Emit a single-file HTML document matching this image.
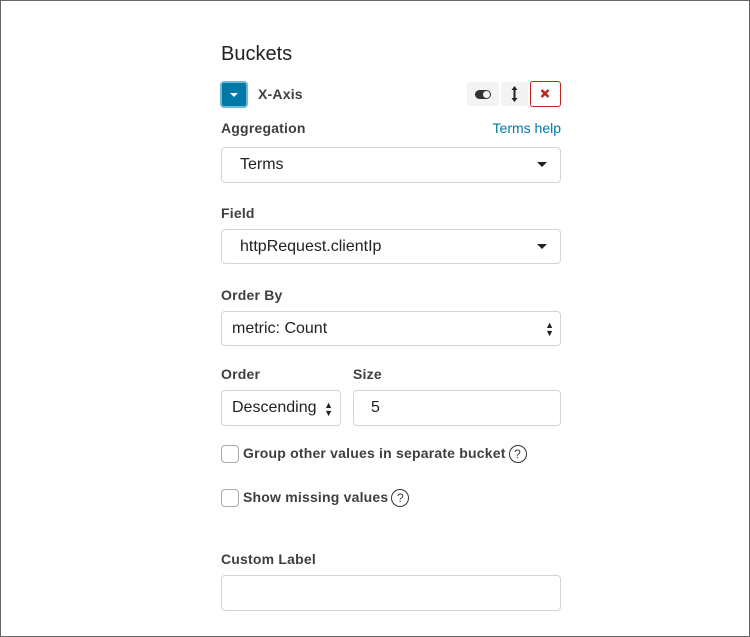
<!DOCTYPE html>
<html><head><style>
*{box-sizing:border-box;margin:0;padding:0}
body{width:750px;height:637px;background:#fff;font-family:"Liberation Sans",sans-serif;color:#333;position:relative;overflow:hidden}
.frame{position:absolute;left:0;top:0;width:750px;height:637px;border:1px solid #666}
.a{position:absolute}
.lbl{font-weight:bold;font-size:14px;color:#3f3f3f;letter-spacing:0.2px}
.box{border:1px solid #d4d4d4;border-radius:4px;background:#fff;font-size:16px;color:#222;display:flex;align-items:center}
.caret{position:absolute;right:13px;top:50%;margin-top:-3px;border-left:5px solid transparent;border-right:5px solid transparent;border-top:5px solid #222}
.cb{width:18px;height:18px;border:1px solid #aaa;border-radius:4px}
.q{display:inline-block;width:18px;height:18px;border:1.3px solid #333;border-radius:50%;font-size:12px;text-align:center;line-height:16px;font-weight:normal;margin-left:3px;vertical-align:middle}
</style></head><body>
<div class="frame"></div>
<div class="a" style="left:221px;top:43px;font-size:20px;color:#222">Buckets</div>
<div class="a" style="left:220px;top:81px;width:28px;height:27px;background:#0079a5;border:2px solid #6fb8d6;border-radius:4px"><div style="position:absolute;left:8px;top:10px;border-left:4px solid transparent;border-right:4px solid transparent;border-top:4px solid #fff"></div></div>
<div class="a lbl" style="left:258px;top:86px">X-Axis</div>
<div class="a" style="left:467px;top:82px;width:32px;height:24px;background:#f3f3f3;border-radius:3px"><div style="position:absolute;left:8px;top:8px;width:16px;height:9px;border-radius:5px;background:#333"><div style="position:absolute;right:1px;top:1px;width:7px;height:7px;border-radius:50%;background:#f3f3f3"></div></div></div>
<div class="a" style="left:501px;top:82px;width:27px;height:24px;background:#f3f3f3;border-radius:3px"><svg width="27" height="24" viewBox="0 0 27 24"><path d="M13.5 5v14" stroke="#222" stroke-width="2"/><path d="M10.5 8l3-4 3 4zM10.5 16l3 4 3-4z" fill="#222"/></svg></div>
<div class="a" style="left:530px;top:81px;width:31px;height:26px;border:1.5px solid #bd271e;border-radius:3px"><svg width="28" height="23" viewBox="0 0 28 23"><path d="M10.5 8l7 7M17.5 8l-7 7" stroke="#bd271e" stroke-width="2.6"/></svg></div>
<div class="a lbl" style="left:221px;top:120px">Aggregation</div>
<div class="a" style="right:189px;top:120px;font-size:14px;color:#0079a5">Terms help</div>
<div class="a box" style="left:221px;top:147px;width:340px;height:36px;padding-left:18px">Terms<span class="caret"></span></div>
<div class="a lbl" style="left:221px;top:205px">Field</div>
<div class="a box" style="left:221px;top:229px;width:340px;height:35px;padding-left:18px">httpRequest.clientIp<span class="caret"></span></div>
<div class="a lbl" style="left:221px;top:287px">Order By</div>
<div class="a box" style="left:221px;top:311px;width:340px;height:35px;padding-left:10px">metric: Count<span style="position:absolute;right:6px;top:9px;font-size:9px;line-height:8px">▲<br>▼</span></div>
<div class="a lbl" style="left:221px;top:366px">Order</div>
<div class="a lbl" style="left:353px;top:366px">Size</div>
<div class="a box" style="left:221px;top:390px;width:120px;height:36px;padding-left:10px">Descending<span style="position:absolute;right:7px;top:10px;font-size:9px;line-height:8px">▲<br>▼</span></div>
<div class="a box" style="left:353px;top:390px;width:208px;height:36px;padding-left:17px">5</div>
<div class="a cb" style="left:221px;top:445px"></div>
<div class="a lbl" style="left:243px;top:445px">Group other values in separate bucket<span class="q">?</span></div>
<div class="a cb" style="left:221px;top:489px"></div>
<div class="a lbl" style="left:243px;top:489px">Show missing values<span class="q">?</span></div>
<div class="a lbl" style="left:221px;top:551px">Custom Label</div>
<div class="a box" style="left:221px;top:575px;width:340px;height:36px"></div>
</body></html>
